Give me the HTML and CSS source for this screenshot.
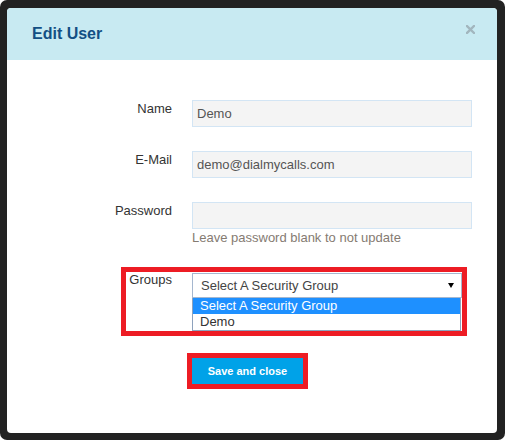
FILE: index.html
```html
<!DOCTYPE html>
<html>
    <head>
        <meta charset="utf-8" />
        <title>Edit User</title>
        <link rel="stylesheet" href="styles.css">
    </head>
    <body>
        <div class="frame">
            <div class="modal">
                <div class="modal-header">
                    <h4 class="modal-title">Edit User</h4>
                    <span class="close">
                        <svg width="9" height="9" viewBox="0 0 9 9">
                            <path d="M1 1L8 8M8 1L1 8" stroke="#a2b6be" stroke-width="2.4" stroke-linecap="square" />
                        </svg>
                    </span>
                </div>
                <div class="modal-body">
                    <form class="form">
                        <div class="row">
                            <label class="label">Name</label>
                            <div class="field">
                                <input class="input" type="text" value="Demo" />
                            </div>
                        </div>
                        <div class="row">
                            <label class="label">E-Mail</label>
                            <div class="field">
                                <input class="input" type="text" value="demo@dialmycalls.com" />
                            </div>
                        </div>
                        <div class="row row-help">
                            <label class="label">Password</label>
                            <div class="field">
                                <input class="input" type="password" value="" />
                                <div class="help">Leave password blank to not update</div>
                            </div>
                        </div>
                        <div class="row row-groups">
                            <label class="label label-groups">Groups</label>
                            <div class="field">
                                <div class="select">
                                    <span>Select A Security Group</span>
                                    <svg class="caret" width="6" height="5" viewBox="0 0 6 5">
                                        <polygon points="0,0 6,0 3,5" fill="#000" />
                                    </svg>
                                </div>
                                <div class="options">
                                    <div class="option selected">Select A Security Group</div>
                                    <div class="option">Demo</div>
                                </div>
                            </div>
                            <div class="mark"></div>
                        </div>
                        <div class="row">
                            <div class="field field-button">
                                <button class="btn" type="button">Save and close</button>
                            </div>
                        </div>
                    </form>
                </div>
            </div>
        </div>
    </body>
</html>
```

FILE: styles.css
```css
* {
    box-sizing: border-box;
}
body {
    margin: 0;
    background: #ffffff;
    font-family: "Liberation Sans", Arial, sans-serif;
}
.frame {
    width: 505px;
    height: 440px;
    background: #222222;
    border-radius: 7px;
    padding: 8px 8px 7px 7px;
}
.modal {
    height: 100%;
    background: #ffffff;
    border-radius: 4px;
    overflow: hidden;
}
.modal-header {
    height: 52px;
    background: #c8eaf2;
    display: flex;
    justify-content: space-between;
    padding: 0 22px 0 25px;
}
.modal-title {
    margin: 0;
    align-self: center;
    font-size: 16px;
    font-weight: bold;
    color: #134f84;
}
.close {
    display: block;
    margin-top: 17px;
    width: 9px;
    height: 9px;
}
.close svg {
    display: block;
}
.modal-body {
    padding-top: 40px;
}
.form {
    margin: 0;
}
.row {
    display: grid;
    grid-template-columns: 165px 280px;
    column-gap: 20px;
    margin-bottom: 24px;
}
.row-help {
    margin-bottom: 26px;
}
.row-groups {
    position: relative;
    margin-bottom: 27px;
}
.label {
    text-align: right;
    font-size: 13px;
    line-height: 18px;
    color: #333333;
}
.label-groups {
    margin-top: -2px;
}
.input {
    display: block;
    width: 280px;
    height: 27px;
    margin: 0;
    background: #f4f4f4;
    border: 1px solid #d3e5f4;
    padding: 0 4px;
    font-family: inherit;
    font-size: 13px;
    color: #555555;
    outline: none;
}
.help {
    font-size: 13px;
    line-height: 18px;
    color: #857b72;
}
.select {
    width: 270px;
    height: 25px;
    background: #ffffff;
    border: 1px solid #a5b7cf;
    display: flex;
    align-items: center;
    justify-content: space-between;
    padding: 0 7px 0 8px;
    font-size: 13px;
    color: #444444;
}
.caret {
    display: block;
}
.options {
    width: 269px;
    border: 1px solid #8ea2bd;
    border-top: none;
}
.option {
    height: 16px;
    line-height: 16px;
    padding-left: 7px;
    font-size: 13px;
    color: #333333;
}
.selected {
    background: #1e90ff;
    color: #ffffff;
}
.mark {
    position: absolute;
    top: -6px;
    left: 114px;
    width: 346px;
    height: 69px;
    border: 5px solid #ed1c24;
    pointer-events: none;
}
.field-button {
    grid-column: 2;
}
.btn {
    display: block;
    width: 111px;
    height: 26px;
    margin: 0;
    padding: 0;
    border: none;
    background: #00a2e8;
    color: #ffffff;
    font-family: inherit;
    font-size: 11px;
    font-weight: bold;
    outline: 5px solid #ed1c24;
}
```
